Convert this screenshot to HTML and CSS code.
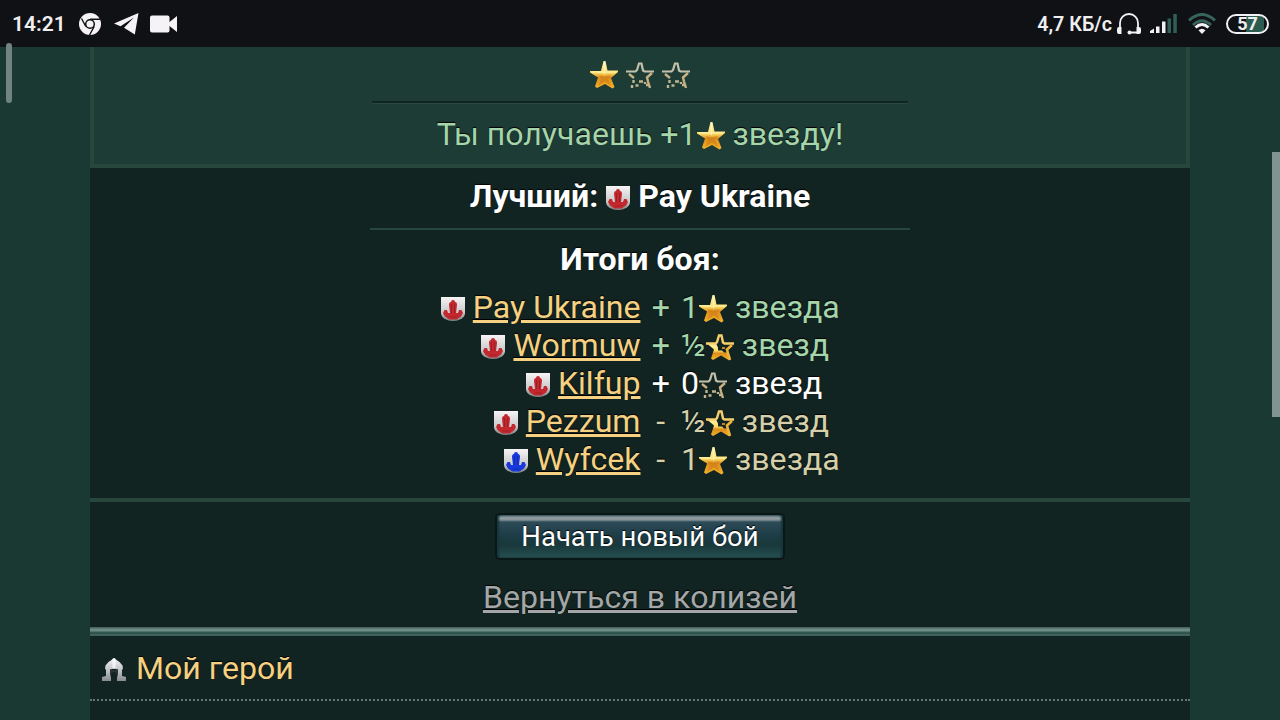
FILE: index.html
```
<!DOCTYPE html>
<html lang="ru">
<head>
    <meta charset="UTF-8">
    <meta name="viewport" content="width=device-width, initial-scale=1.0">
    <title>Колизей</title>
    <link rel="stylesheet" href="styles.css">
</head>
<body>
    <!-- icons -->
    <svg class="defs" width="0" height="0">
        <defs>
            <linearGradient id="gold" x1="0" y1="0" x2="0" y2="1">
                <stop offset="0" stop-color="#fff3b0"/>
                <stop offset="0.42" stop-color="#ffdf6a"/>
                <stop offset="0.6" stop-color="#dc8d1c"/>
                <stop offset="1" stop-color="#f5b52c"/>
            </linearGradient>
            <linearGradient id="plate" x1="0" y1="0" x2="0" y2="1">
                <stop offset="0" stop-color="#f6f4f5"/>
                <stop offset="0.65" stop-color="#c9c9ca"/>
                <stop offset="1" stop-color="#777d7d"/>
            </linearGradient>
            <linearGradient id="steel" x1="0" y1="0" x2="0" y2="1">
                <stop offset="0" stop-color="#f4f4f6"/>
                <stop offset="0.6" stop-color="#b9bcc0"/>
                <stop offset="1" stop-color="#858b8f"/>
            </linearGradient>
        </defs>
        <symbol id="star" viewBox="0 0 28 28">
            <path d="M13.500 0h2l2 9.500H28v1.500l-7 6 3.500 9-2 1.500L15 23l-8 4-2-1.500 3-9L0 11.500V10h11z" fill="url(#gold)"/>
            <path d="M9 14l5 1.500 7-1.500-3 4 3 7-6-4.500L8 25l3-7z" fill="#ce7c14" opacity=".6"/>
            <path d="M14.500 1v12M2 11h24" stroke="#fff6ca" stroke-width="1.200" fill="none" opacity=".8"/>
        </symbol>
        <symbol id="star-empty" viewBox="0 0 28 28">
            <path d="M0 10.500h9.500l1.500-1.500 2-6.500h2.500l1.500 7 1.500 1H28" fill="none" stroke="#c3c1aa" stroke-width="2.200"/>
            <path d="M26 12l-5 4.500 1 4 2 6.500M3 13l5 4" fill="none" stroke="#c8b183" stroke-width="2.400"/>
            <path d="M7.500 19v3M6 24v3M9.500 24.500h3M13 20.500h4M19 21v2M20 24h3" fill="none" stroke="#c0b48e" stroke-width="2.400"/>
        </symbol>
        <symbol id="star-half" viewBox="0 0 28 28">
            <path d="M1 10.500h9l2 4v3h4l2 2h4l2.500 6-2 1.500-7.500-4.500L7 27l-2-1.500 3-9z" fill="url(#gold)"/>
            <path d="M0 10.500h9.500l1.500-1.500 2-6.500h2.500l1.500 7 1.500 1H28" fill="none" stroke="#f7d06d" stroke-width="2.400"/>
            <path d="M26 12l-5 4.500 1 4 2 6.500" fill="none" stroke="#efb33a" stroke-width="2.600"/>
            <path d="M16 14h3v2h-3z" fill="#c9851d"/>
        </symbol>
        <symbol id="shield" viewBox="0 0 24 24">
            <path d="M0 0h24v16q0 4-5 6.500-7 3-14 0Q0 20 0 16z" fill="url(#plate)"/>
            <path d="M12 3q2 0 2 2 2 0 2 3l-1 8h2l1-3h2.500l1.500 3-2 3.500-4.500 3h-7L4 19.500 2 16l1.500-3H6l1 3h2L8 8q0-3 2-3 0-2 2-2z" fill="currentColor"/>
            <path d="M10.500 7v9M13.500 7v9M9 20h7" stroke="#000" stroke-width="1" opacity=".2"/>
        </symbol>
        <symbol id="helmet" viewBox="0 0 24 24">
            <path d="M11.500 0h1l2 2 3 2 3 3.500.5 3-1 1.500v6l4 1v4H15v-7l1-4-4-2-4 2 1 4v7H0v-4l4-1v-6l-1-1.500.5-3L6.500 4l3-2z" fill="url(#steel)"/>
            <path d="M8 11l4 1.500 4-1.500v5l-1 4v-4l-2-2h-2l-2 2v4l-1-4z" fill="#2a3435"/>
            <path d="M12 1v10" stroke="#fff" stroke-width="3" opacity=".7"/>
        </symbol>
    </svg>

    <div class="status-bar">
        <div class="status-left">
            <span>14:21</span>
            <svg class="chrome" width="22" height="22" viewBox="0 0 22 22">
                <circle cx="11" cy="11" r="11" fill="#f5f3f5"/>
                <path d="M11 6.200h10M6.800 13.500L2.500 5.500M15.200 13.500L10.500 22" stroke="#101114" stroke-width="1.400"/>
                <circle cx="11" cy="11" r="4.300" fill="#f5f3f5" stroke="#101114" stroke-width="1.500"/>
            </svg>
            <svg class="telegram" width="25" height="22" viewBox="0 0 25 22">
                <path d="M24.500 0L0 10.500l6.500 2.800L20 4.500 10 14.800 20.800 21.500z" fill="#f5f3f5"/>
            </svg>
            <svg class="camera" width="27" height="18" viewBox="0 0 27 18">
                <path d="M2 .5h15.500q2 0 2 2V7L27 1v16l-7.500-6v4.500q0 2-2 2H2q-2 0-2-2v-13q0-2 2-2z" fill="#f5f3f5"/>
            </svg>
        </div>
        <div class="status-right">
            <span class="speed">4,7 КБ/с</span>
            <svg class="headset" width="24" height="22" viewBox="0 0 24 22">
                <path d="M3 17V10a9 9 0 0 1 18 0v7M20.500 19.500H12" fill="none" stroke="#f2f1f3" stroke-width="1.800"/>
                <path d="M0 16q0-2 2-2h2.500v7H2q-2 0-2-2zM24 16q0-2-2-2h-2.500v7H22q2 0 2-2z" fill="#f2f1f3"/>
                <circle cx="12.500" cy="19.500" r="2" fill="#f2f1f3"/>
            </svg>
            <svg class="signal" width="27" height="19" viewBox="0 0 27 19">
                <path d="M0 19v-2l4-2.500V19zM6 12.500h3.500V19H6zM12 7.500h3.500V19H12z" fill="#f2f1f3"/>
                <path d="M17.500 4.500H21V19h-3.500zM23.300 0h3.500v19h-3.500z" fill="#315f57"/>
            </svg>
            <svg class="wifi" width="28" height="21" viewBox="0 0 28 21">
                <path d="M1 7.500q13-12 26 0M5 12q9-8.500 18 0" fill="none" stroke="#37645c" stroke-width="3"/>
                <path d="M7.500 14.500q6.500-6 13 0" fill="none" stroke="#f2f1f3" stroke-width="3"/>
                <path d="M10.500 17.300q3.500-3 7 0L14 21z" fill="#f2f1f3"/>
            </svg>
            <div class="battery">57</div>
        </div>
    </div>

    <div class="page">
        <div class="reward">
            <div class="stars">
                <svg class="star"><use href="#star"/></svg>
                <svg class="star"><use href="#star-empty"/></svg>
                <svg class="star"><use href="#star-empty"/></svg>
            </div>
            <div class="reward-line"></div>
            <div class="reward-text">Ты получаешь +1<svg class="star"><use href="#star"/></svg> звезду!</div>
        </div>

        <div class="results">
            <div class="best">Лучший: <svg class="shield red"><use href="#shield"/></svg> Pay Ukraine</div>
            <div class="line"></div>
            <div class="results-title">Итоги боя:</div>
            <div class="table">
                <div class="name"><svg class="shield red"><use href="#shield"/></svg> <a href="#">Pay Ukraine</a></div>
                <div class="sign win">+</div>
                <div class="win">1<svg class="star"><use href="#star"/></svg> звезда</div>

                <div class="name"><svg class="shield red"><use href="#shield"/></svg> <a href="#">Wormuw</a></div>
                <div class="sign win">+</div>
                <div class="win">½<svg class="star"><use href="#star-half"/></svg> звезд</div>

                <div class="name"><svg class="shield red"><use href="#shield"/></svg> <a href="#">Kilfup</a></div>
                <div class="sign">+</div>
                <div>0<svg class="star"><use href="#star-empty"/></svg> звезд</div>

                <div class="name"><svg class="shield red"><use href="#shield"/></svg> <a href="#">Pezzum</a></div>
                <div class="sign lose">-</div>
                <div class="lose">½<svg class="star"><use href="#star-half"/></svg> звезд</div>

                <div class="name"><svg class="shield blue"><use href="#shield"/></svg> <a href="#">Wyfcek</a></div>
                <div class="sign lose">-</div>
                <div class="lose">1<svg class="star"><use href="#star"/></svg> звезда</div>
            </div>
        </div>

        <div class="actions">
            <a class="btn" href="#">Начать новый бой</a>
            <a class="back" href="#">Вернуться в колизей</a>
        </div>

        <div class="menu">
            <a class="menu-item" href="#"><svg class="helmet"><use href="#helmet"/></svg> Мой герой</a>
        </div>
    </div>

    <div class="edge-handle"></div>
    <div class="scroll-thumb"></div>
</body>
</html>
```
FILE: styles.css
```
:root {
    --bg: #1b3933;
    --panel: #122422;
    --border: #29463d;
    --gold: #f6d181;
    --win: #a5d5aa;
    --lose: #d5d0aa;
}

* {
    box-sizing: border-box;
}

body {
    margin: 0;
    height: 720px;
    overflow: hidden;
    background: var(--bg);
    color: #fff;
    font-family: Roboto, sans-serif;
    font-size: 32.1px;
    line-height: 38px;
    text-shadow: 0 -1px 1px #000;
}

.defs {
    display: block;
}

/* status bar */
.status-bar {
    height: 47px;
    padding: 0 11px 0 12px;
    display: flex;
    justify-content: space-between;
    align-items: center;
    background: #101114;
    color: #efeef0;
    font-size: 21px;
    font-weight: 600;
    line-height: 49px;
    text-shadow: none;
}

.status-left,
.status-right {
    height: 47px;
    display: flex;
    align-items: center;
}

.status-left span,
.status-right span {
    padding-top: 1px;
}

.speed {
    font-size: 19.7px;
}

.chrome {
    margin-left: 13px;
}

.telegram {
    margin-left: 13px;
}

.camera {
    margin-left: 11px;
}

.headset {
    margin-left: 5px;
}

.signal {
    margin-left: 9px;
}

.wifi {
    margin-left: 11px;
}

.battery {
    width: 43px;
    height: 20px;
    margin-left: 10px;
    border: 2px solid #f2f1f3;
    border-radius: 10px;
    background: linear-gradient(90deg, #101114 18px, #2c5b50 18px 36px, #101114 36px);
    font-size: 18px;
    font-weight: 700;
    line-height: 16px;
    text-align: center;
}

/* page */
.page {
    width: 1100px;
    height: 673px;
    margin: 0 auto;
    background: var(--panel);
}

.star {
    width: 28px;
    height: 28px;
    vertical-align: -5px;
}

.shield,
.helmet {
    width: 24px;
    height: 24px;
    vertical-align: -3px;
}

.red {
    color: #c4282f;
}

.blue {
    color: #1738dc;
}

.reward {
    height: 121px;
    padding-top: 14px;
    border: 4px solid var(--border);
    border-top: none;
    background: #1e3c36;
    text-align: center;
}

.stars {
    height: 40px;
    display: flex;
    justify-content: center;
    gap: 8px;
}

.reward-line {
    width: 536px;
    height: 3px;
    margin: 0 auto 11px;
    border-top: 2px solid #11231f;
    border-bottom: 1px solid #29483f;
}

.reward-text {
    color: var(--win);
}

.results {
    height: 334px;
    padding-top: 9px;
    border-bottom: 4px solid var(--border);
    text-align: center;
}

.best,
.results-title {
    font-weight: 700;
}

.line {
    width: 540px;
    height: 2px;
    margin: 13px auto 10px;
    background: #28463d;
}

.table {
    margin-top: 10px;
    display: grid;
    grid-template-columns: 550.5px 40.5px 1fr;
    grid-auto-rows: 38px;
    text-align: left;
}

.name {
    text-align: right;
}

.name a {
    color: var(--gold);
}

.sign {
    text-align: center;
}

.win {
    color: var(--win);
}

.lose {
    color: var(--lose);
}

.actions {
    height: 125px;
    padding-top: 11px;
    display: flex;
    flex-direction: column;
    align-items: center;
}

.btn {
    width: 290px;
    height: 47px;
    border: 2px solid #0a1719;
    border-radius: 5px;
    background: linear-gradient(#60787e, #929da2 3px, #829095 5px, #2d4b57 7px, #1c3c46 50%, #19383b 70%, #265052);
    box-shadow: inset 2px 0 2px #18353a, inset -2px 0 2px #18353a;
    color: #fff;
    font-size: 27.5px;
    line-height: 44px;
    text-align: center;
    text-decoration: none;
}

.back {
    margin-top: 18px;
    color: #a3a7a7;
}

.menu {
    padding-top: 9px;
    background: linear-gradient(#3d5a54, #7b9590 3px, #426961 5px, #23443e 6px, #4b7069 8px, #315049 9px, transparent 9px);
}

.menu-item {
    height: 65px;
    padding: 13px 12px 0;
    display: block;
    border-bottom: 2px dotted #647773;
    color: var(--gold);
    text-decoration: none;
}

.helmet {
    margin-right: 2px;
}

/* overlays of the phone shell */
.edge-handle {
    position: absolute;
    left: 6px;
    top: 43px;
    width: 6px;
    height: 60px;
    border-radius: 3px;
    background: #71847f;
}

.scroll-thumb {
    position: absolute;
    right: 0;
    top: 152px;
    width: 8px;
    height: 265px;
    background: #829492;
}
```
